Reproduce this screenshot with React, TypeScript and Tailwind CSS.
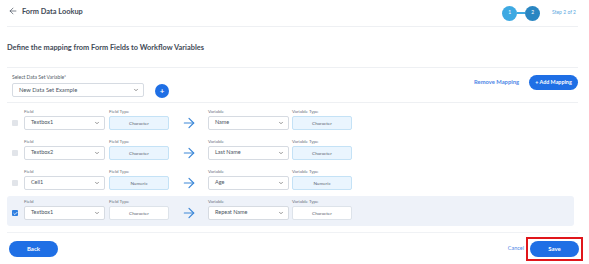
import { ArrowLeft, ArrowRight, ChevronDown, Check } from "lucide-react";

type Mapping = {
  field: string;
  fieldType: string;
  variable: string;
  variableType: string;
  selected?: boolean;
};

const mappings: Mapping[] = [
  { field: "Textbox1", fieldType: "Character", variable: "Name", variableType: "Character" },
  { field: "Textbox2", fieldType: "Character", variable: "Last Name", variableType: "Character" },
  { field: "Cell1", fieldType: "Numeric", variable: "Age", variableType: "Numeric" },
  { field: "Textbox1", fieldType: "Character", variable: "Repeat Name", variableType: "Character", selected: true },
];

function SelectBox({ value, width }: { value: string; width: string }) {
  return (
    <div
      className={`${width} h-[14px] flex items-center justify-between bg-white border border-[#d6dbe2] rounded-[2px] pl-[6px] pr-[4px]`}
    >
      <span className="text-[5.5px] text-[#4b5563] leading-none">{value}</span>
      <ChevronDown size={6} strokeWidth={2.5} className="text-[#555]" />
    </div>
  );
}

function TypeBox({ value, selected }: { value: string; selected?: boolean }) {
  return (
    <div
      className={`w-[60px] h-[14px] flex items-center justify-center rounded-[2px] border ${
        selected ? "bg-white border-[#dde3ea]" : "bg-[#eaf5fe] border-[#c4e2f6]"
      }`}
    >
      <span className="text-[4.6px] text-[#5b6470] leading-none">{value}</span>
    </div>
  );
}

function Label({ children }: { children: string }) {
  return <div className="h-[6px] text-[4.5px] leading-[6px] text-[#6b7280]">{children}</div>;
}

function MappingRow({ m }: { m: Mapping }) {
  return (
    <div
      className={`h-[30px] flex items-end pl-[5px] pb-[6px] rounded-[3px] ${
        m.selected ? "bg-[#eef2f9]" : ""
      }`}
    >
      <div className="w-[6px] h-[6px] mb-[4px] rounded-[1px] flex items-center justify-center shrink-0 bg-[#e1e4e9]">
        {m.selected && (
          <div className="w-[6px] h-[6px] rounded-[1px] bg-[#2f7fe0] flex items-center justify-center">
            <Check size={5} strokeWidth={4} className="text-white" />
          </div>
        )}
      </div>
      <div className="ml-[6px] flex flex-col gap-[1px]">
        <Label>Field</Label>
        <SelectBox value={m.field} width="w-[81px]" />
      </div>
      <div className="ml-[4px] flex flex-col gap-[1px]">
        <Label>Field Type</Label>
        <TypeBox value={m.fieldType} selected={m.selected} />
      </div>
      <div className="w-[39px] h-[14px] flex items-center justify-center">
        <ArrowRight size={16} strokeWidth={1.8} color="#3d88d8" />
      </div>
      <div className="flex flex-col gap-[1px]">
        <Label>Variable</Label>
        <SelectBox value={m.variable} width="w-[81px]" />
      </div>
      <div className="ml-[3px] flex flex-col gap-[1px]">
        <Label>Variable Type</Label>
        <TypeBox value={m.variableType} selected={m.selected} />
      </div>
    </div>
  );
}

export default function App() {
  return (
    <div className="w-[589px] h-[264px] bg-white font-['Lato',sans-serif] overflow-hidden">
      <div className="w-[578px] pl-[7px]">
        {/* Header */}
        <div className="h-[27px] flex items-center justify-between border-b border-[#eef0f3]">
          <div className="flex items-center gap-[4px] pl-[1px] -mt-[3px]">
            <ArrowLeft size={10} strokeWidth={1.6} className="text-[#3f4a57]" />
            <span className="text-[7.4px] font-bold text-[#3f4a57]">Form Data Lookup</span>
          </div>
          <div className="flex items-center pr-[2px]">
            <div className="w-[15px] h-[15px] rounded-full bg-[#3ea9e2] flex items-center justify-center text-[5px] text-white">
              1
            </div>
            <div className="w-[8px] h-[1.5px] bg-[#3ea9e2]" />
            <div className="w-[15px] h-[15px] rounded-full bg-[#2a86c2] flex items-center justify-center text-[5px] text-white">
              2
            </div>
            <span className="ml-[12px] text-[5px] text-[#5ba8e0]">Step 2 of 2</span>
          </div>
        </div>

        {/* Section title */}
        <div className="h-[41px] flex items-center border-b border-[#eef0f3] pt-[2px]">
          <h1 className="text-[7.4px] font-bold text-[#3f4a57]">
            Define the mapping from Form Fields to Workflow Variables
          </h1>
        </div>

        {/* Data set selection */}
        <div className="h-[35px] flex items-center justify-between border-b border-[#eef0f3]">
          <div className="pl-[5px] flex items-end gap-[11px]">
            <div className="flex flex-col gap-[3px]">
              <span className="text-[5px] leading-[6px] text-[#555d68]">Select Data Set Variable*</span>
              <div className="w-[132px] h-[14px] flex items-center justify-between border border-[#d6dbe2] rounded-[2px] pl-[6px] pr-[4px]">
                <span className="text-[5.8px] text-[#4b5563] leading-none">New Data Set Example</span>
                <ChevronDown size={6} strokeWidth={2.5} className="text-[#555]" />
              </div>
            </div>
            <div className="w-[14px] h-[14px] -mb-[1px] rounded-full bg-[#1f6fe5] flex items-center justify-center text-white text-[8px] font-bold leading-none">
              +
            </div>
          </div>
          <div className="flex items-center gap-[10px] -mt-[5px]">
            <span className="text-[5.8px] font-bold text-[#4f86e6]">Remove Mapping</span>
            <div className="w-[49px] h-[15px] rounded-full bg-[#1f6fe5] flex items-center justify-center text-[5.4px] font-bold text-white">
              + Add Mapping
            </div>
          </div>
        </div>

        {/* Mapping rows */}
        <div className="pt-[3px] pb-[6px] pr-[4px] border-b border-[#f0f2f5]">
          {mappings.map((m, i) => (
            <MappingRow key={i} m={m} />
          ))}
        </div>

        {/* Footer */}
        <div className="h-[31px] flex items-center justify-between pl-[2px]">
          <div className="w-[49px] h-[16px] rounded-full bg-[#1f6fe5] flex items-center justify-center text-[6px] font-bold text-white">
            Back
          </div>
          <div className="flex items-center">
            <span className="text-[5.5px] text-[#4f86e6] mr-[2px]">Cancel</span>
            <div className="border-2 border-[#e0161b] p-[2px] -mr-[5px]">
              <div className="w-[49px] h-[16px] rounded-full bg-[#1f6fe5] flex items-center justify-center text-[6px] font-bold text-white">
                Save
              </div>
            </div>
          </div>
        </div>
      </div>
    </div>
  );
}
